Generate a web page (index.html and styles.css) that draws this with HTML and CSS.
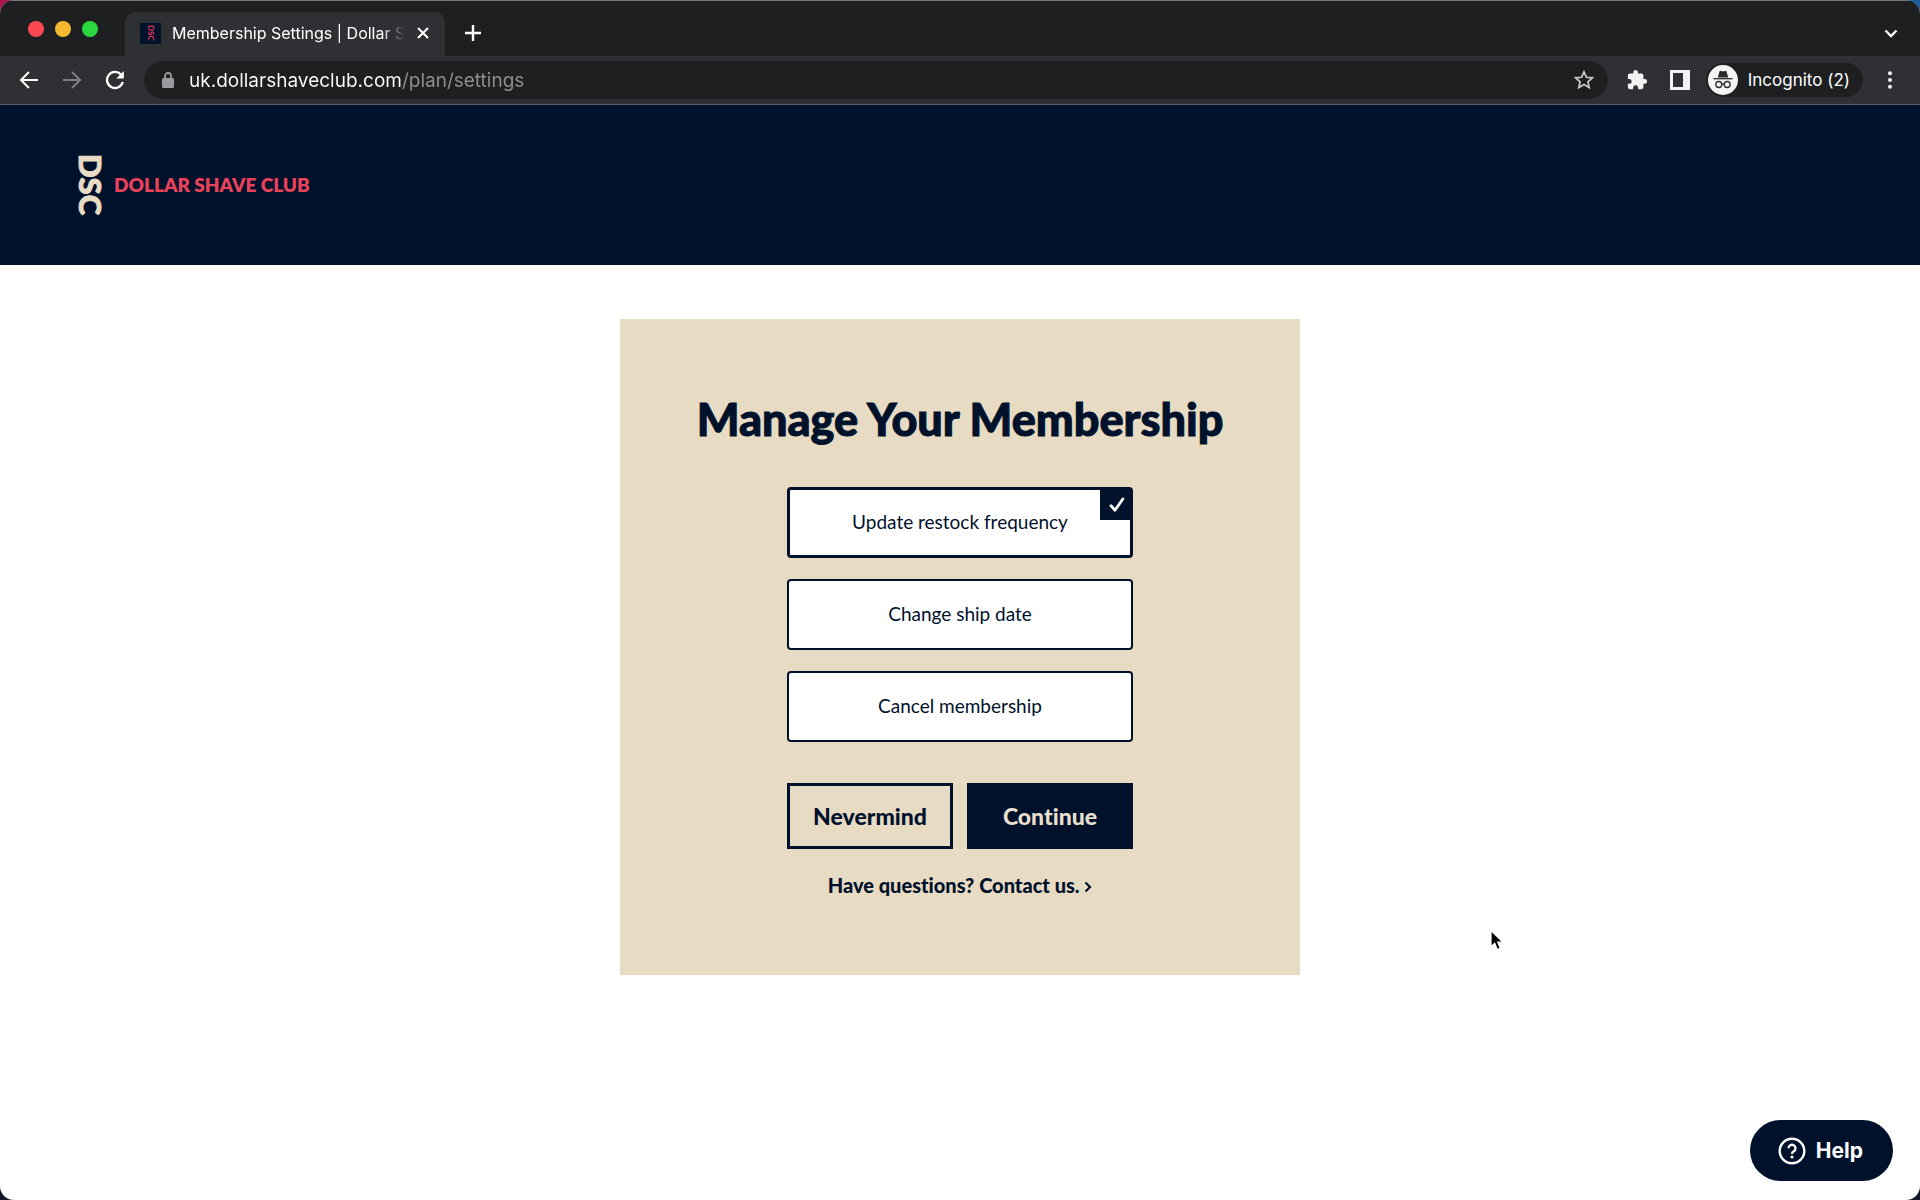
FILE: index.html
```html
<!DOCTYPE html>
<html lang="en">
<head>
	<meta charset="utf-8">
	<title>Membership Settings | Dollar Shave Club</title>
	<link rel="stylesheet" href="styles.css">
</head>
<body>
	<div class="window">
		<div class="tabstrip">
			<div class="lights">
				<button class="light red" aria-label="Close window"></button>
				<button class="light yellow" aria-label="Minimise"></button>
				<button class="light green" aria-label="Full screen"></button>
			</div>
			<div class="tab">
				<span class="favicon">DSC</span>
				<span class="tab-title">Membership Settings | Dollar Shave Club</span>
				<button class="icon" aria-label="Close tab">
					<svg width="12" height="12" viewBox="0 0 12 12"><path d="M1 1l10 10M11 1L1 11" stroke="#fff" stroke-width="2"/></svg>
				</button>
			</div>
			<button class="icon new-tab" aria-label="New tab">
				<svg width="18" height="18" viewBox="0 0 18 18"><path d="M9 1v16M1 9h16" stroke="#fff" stroke-width="2.4"/></svg>
			</button>
			<button class="icon tab-search" aria-label="Search tabs">
				<svg width="14" height="10" viewBox="0 0 14 10"><path d="M1.500 1.500l5.500 5.500 5.500-5.500" fill="none" stroke="#fff" stroke-width="2.300"/></svg>
			</button>
		</div>

		<div class="toolbar">
			<div class="nav">
				<button class="icon" aria-label="Back">
					<svg width="20" height="20" viewBox="0 0 20 20"><path d="M19 10H2M10 2l-8 8 8 8" fill="none" stroke="#fff" stroke-width="2"/></svg>
				</button>
				<button class="icon" aria-label="Forward">
					<svg width="20" height="20" viewBox="0 0 20 20"><path d="M1 10h17M10 2l8 8-8 8" fill="none" stroke="#7d7f82" stroke-width="2"/></svg>
				</button>
				<button class="icon" aria-label="Reload">
					<svg width="20" height="20" viewBox="0 0 20 20"><path d="M16 4.600A8 8 0 1 0 17.800 12" fill="none" stroke="#fff" stroke-width="2.300"/><path d="M18.800 1v7.500h-7.500z" fill="#fff"/></svg>
				</button>
			</div>
			<div class="omnibox">
				<svg width="12" height="16" viewBox="0 0 12 16"><rect x="0" y="6" width="12" height="10" rx="1.500" fill="#9a9b9e"/><path d="M3 7V4a3 3 0 0 1 6 0v3" fill="none" stroke="#9a9b9e" stroke-width="1.800"/></svg>
				<input class="url" type="text" aria-label="Address" value="uk.dollarshaveclub.com/plan/settings">
				<button class="icon" aria-label="Bookmark">
					<svg width="20" height="20" viewBox="0 0 20 20"><path d="M10 1.800l2.400 5.500 6 .5-4.500 4 1.300 5.800-5.200-3-5.200 3 1.300-5.800-4.500-4 6-.5z" fill="none" stroke="#c9cacd" stroke-width="1.700"/></svg>
				</button>
			</div>
			<button class="icon extensions" aria-label="Extensions">
				<svg width="22" height="22" viewBox="0 0 24 24"><path fill="#f1f2f4" d="M20.500 11H19V7a2 2 0 0 0-2-2h-4V3.500a2.500 2.500 0 0 0-5 0V5H4a2 2 0 0 0-2 2v3.800h1.500a2.700 2.700 0 0 1 0 5.400H2V20a2 2 0 0 0 2 2h3.800v-1.500a2.700 2.700 0 0 1 5.400 0V22H17a2 2 0 0 0 2-2v-4h1.500a2.500 2.500 0 0 0 0-5z"/></svg>
			</button>
			<button class="icon panel" aria-label="Side panel">
				<svg width="20" height="20" viewBox="0 0 20 20"><path fill="#f1f2f4" fill-rule="evenodd" d="M0 0h20v20H0zM3 3v14h10V3z"/></svg>
			</button>
			<button class="incognito">
				<svg width="30" height="30" viewBox="0 0 30 30">
					<circle cx="15" cy="15" r="15" fill="#f4f5f6"/>
					<path d="M9.800 12.500l1.700-6q.4-1 1.500-.6l2 .7 2-.7q1.100-.4 1.500.6l1.700 6z" fill="#2a2b2e"/>
					<path d="M5.500 13.700h19" stroke="#2a2b2e" stroke-width="1.300"/>
					<circle cx="10.800" cy="19.500" r="3" fill="none" stroke="#2a2b2e" stroke-width="1.300"/>
					<circle cx="19.200" cy="19.500" r="3" fill="none" stroke="#2a2b2e" stroke-width="1.300"/>
					<path d="M13.800 19.200q1.200-.8 2.400 0" fill="none" stroke="#2a2b2e" stroke-width="1.300"/>
				</svg>
				Incognito (2)
			</button>
			<button class="icon menu" aria-label="Menu">
				<svg width="6" height="18" viewBox="0 0 6 18"><g fill="#f1f2f4"><circle cx="3" cy="2.200" r="2"/><circle cx="3" cy="9" r="2"/><circle cx="3" cy="15.800" r="2"/></g></svg>
			</button>
		</div>

		<header class="header">
			<a class="logo" href="#">
				<span class="logo-mark">DSC</span>
				<span class="logo-name">DOLLAR SHAVE CLUB</span>
			</a>
		</header>

		<main>
			<form class="card">
				<h1>Manage Your Membership</h1>
				<div class="choices">
					<div class="options">
						<label class="option">
							<input type="radio" name="action" checked>
							Update restock frequency
							<span class="tick">
								<svg width="16" height="16" viewBox="0 0 16 16"><path d="M2 8.800l4 4.400L13.800 2" fill="none" stroke="#fff" stroke-width="2.800" stroke-linecap="round" stroke-linejoin="round"/></svg>
							</span>
						</label>
						<label class="option">
							<input type="radio" name="action">
							Change ship date
						</label>
						<label class="option">
							<input type="radio" name="action">
							Cancel membership
						</label>
					</div>
					<div class="buttons">
						<button class="button" type="button">Nevermind</button>
						<button class="button primary" type="button">Continue</button>
					</div>
					<a class="contact" href="#">Have questions? Contact us.
						<svg width="8" height="12" viewBox="0 0 8 12"><path d="M1.500 1.500L6 6l-4.500 4.500" fill="none" stroke="#00112b" stroke-width="2.200"/></svg>
					</a>
				</div>
			</form>
		</main>
	</div>

	<button class="help">
		<svg width="28" height="28" viewBox="0 0 28 28"><circle cx="14" cy="14" r="12.300" fill="none" stroke="#fff" stroke-width="2.400"/><path d="M10.500 11.300a3.500 3.500 0 1 1 5.300 3c-1.200.7-1.800 1.300-1.800 2.600" fill="none" stroke="#fff" stroke-width="2.300"/><circle cx="14" cy="20" r="1.500" fill="#fff"/></svg>
		Help
	</button>

	<svg class="cursor" width="16" height="24" viewBox="0 0 16 24"><path d="M2 1.500v16.200l3.700-3.400 2.600 6.200 3-1.300-2.600-6H14z" fill="#000" stroke="#fff" stroke-width="1.200"/></svg>
</body>
</html>
```
FILE: styles.css
```css
* {
	box-sizing: border-box;
}

body {
	margin: 0;
	font-family: Lato, "Open Sans", sans-serif;
	font-variant-ligatures: none;
	color: #00112b;
	background: linear-gradient(90deg, #a8174f 50%, #1b5f9e 50%) top / 100% 50% no-repeat, #10182a;
}

button {
	font: inherit;
	font-variant-ligatures: none;
	color: inherit;
	border: 0;
	padding: 0;
	background: none;
	cursor: pointer;
}

a {
	color: inherit;
	text-decoration: none;
}

.window {
	display: flex;
	flex-direction: column;
	min-height: 100vh;
	border-radius: 14px;
	overflow: hidden;
	background: #fff;
}

/* browser bars */
.tabstrip, .toolbar {
	display: flex;
	align-items: center;
	font-family: Inter, Roboto, sans-serif;
	color: #fff;
}

.tabstrip {
	height: 56px;
	padding: 0 22px 0 28px;
	background: #1e1f21;
	border-top: 1px solid #77787a;
}

.icon {
	display: flex;
	align-items: center;
	justify-content: center;
}

.lights {
	display: flex;
	gap: 11px;
}

.light {
	width: 16px;
	height: 16px;
	border-radius: 50%;
}

.red {
	background: #fb4850;
}

.yellow {
	background: #f7b92f;
}

.green {
	background: #2bd840;
}

.tab {
	display: flex;
	align-items: center;
	align-self: flex-end;
	width: 320px;
	height: 44px;
	margin-left: 27px;
	padding: 0 16px 2px 15px;
	border-radius: 10px 10px 0 0;
	background: #2f3034;
}

.favicon {
	display: flex;
	align-items: center;
	justify-content: center;
	width: 21px;
	height: 21px;
	background: #00112b;
	color: #e8385a;
	font: bold 8px Lato, sans-serif;
	writing-mode: vertical-rl;
}

.tab-title {
	flex: 1;
	margin: 0 12px 0 11px;
	font-size: 16px;
	white-space: nowrap;
	overflow: hidden;
	mask-image: linear-gradient(90deg, #000 90%, transparent);
}

.new-tab {
	margin: 8px 0 0 19px;
}

.tab-search {
	margin: 10px 0 0 auto;
}

.toolbar {
	height: 49px;
	padding: 0 27px 0 19px;
	background: #2f3034;
	border-bottom: 1px solid #5a5d62;
}

.nav {
	display: flex;
	gap: 23px;
	margin-right: 19px;
}

.omnibox {
	display: flex;
	align-items: center;
	flex: 1;
	height: 38px;
	padding: 0 14px 0 18px;
	border-radius: 19px;
	background: #1e1f21;
}

.url {
	flex: 1;
	margin-left: 15px;
	border: 0;
	padding: 0;
	font: 19px Inter, Roboto, sans-serif;
	color: #fff;
	/* host in white, path in grey */
	background: linear-gradient(90deg, #fff 213px, #8f9093 213px);
	-webkit-background-clip: text;
	background-clip: text;
	-webkit-text-fill-color: transparent;
}

.extensions {
	margin-left: 18px;
}

.panel {
	margin-left: 22px;
}

.incognito {
	display: flex;
	align-items: center;
	gap: 10px;
	height: 34px;
	margin-left: 16px;
	padding: 0 13px 0 2px;
	border-radius: 17px;
	background: #1e1f21;
	font-size: 17px;
}

.menu {
	margin-left: 24px;
}

/* site */
.header {
	display: flex;
	align-items: center;
	height: 160px;
	padding: 0 77px;
	background: #00112b;
}

.logo {
	display: flex;
	align-items: center;
	gap: 9px;
}

.logo-mark {
	writing-mode: vertical-rl;
	font-size: 31px;
	font-weight: 900;
	line-height: 28px;
	color: #e8dcc4;
	-webkit-text-stroke: 1px currentColor;
}

.logo-name {
	font-size: 19px;
	font-weight: 800;
	color: #e8425a;
}

main {
	padding: 54px 20px;
}

.card {
	max-width: 680px;
	margin: 0 auto;
	padding: 74px 20px 78px;
	background: #e8dbc3;
	text-align: center;
}

h1 {
	margin: 0 0 42px;
	font-size: 45px;
	font-weight: 900;
	line-height: 52px;
	-webkit-text-stroke: 1px currentColor;
}

.choices {
	max-width: 346px;
	margin: 0 auto;
}

.options {
	display: grid;
	gap: 21px;
}

.option {
	position: relative;
	display: flex;
	align-items: center;
	justify-content: center;
	height: 71px;
	padding-bottom: 2px;
	border: 2px solid #00112b;
	border-radius: 4px;
	background: #fff;
	font-size: 19px;
	cursor: pointer;
}

.option:has(:checked) {
	border-width: 3px;
}

.option input {
	position: absolute;
	opacity: 0;
}

.tick {
	position: absolute;
	top: 0;
	right: 0;
	display: flex;
	align-items: center;
	justify-content: center;
	width: 30px;
	height: 30px;
	padding-left: 3px;
	background: #00112b;
}

.buttons {
	display: grid;
	grid-template-columns: 1fr 1fr;
	gap: 14px;
	margin: 41px 0 24px;
}

.button {
	height: 66px;
	border: 3px solid #00112b;
	font-size: 23px;
	font-weight: 900;
}

.primary {
	background: #00112b;
	color: #e8dfcf;
}

.contact {
	font-size: 20px;
	font-weight: 900;
	line-height: 24px;
}

.help {
	position: fixed;
	right: 27px;
	bottom: 19px;
	display: flex;
	align-items: center;
	gap: 10px;
	height: 61px;
	padding: 0 30px 0 28px;
	border-radius: 31px;
	background: #00112b;
	color: #fff;
	font-family: Inter, sans-serif;
	font-size: 21px;
	font-weight: 700;
}

.cursor {
	position: absolute;
	left: 1489px;
	top: 929px;
}
```
